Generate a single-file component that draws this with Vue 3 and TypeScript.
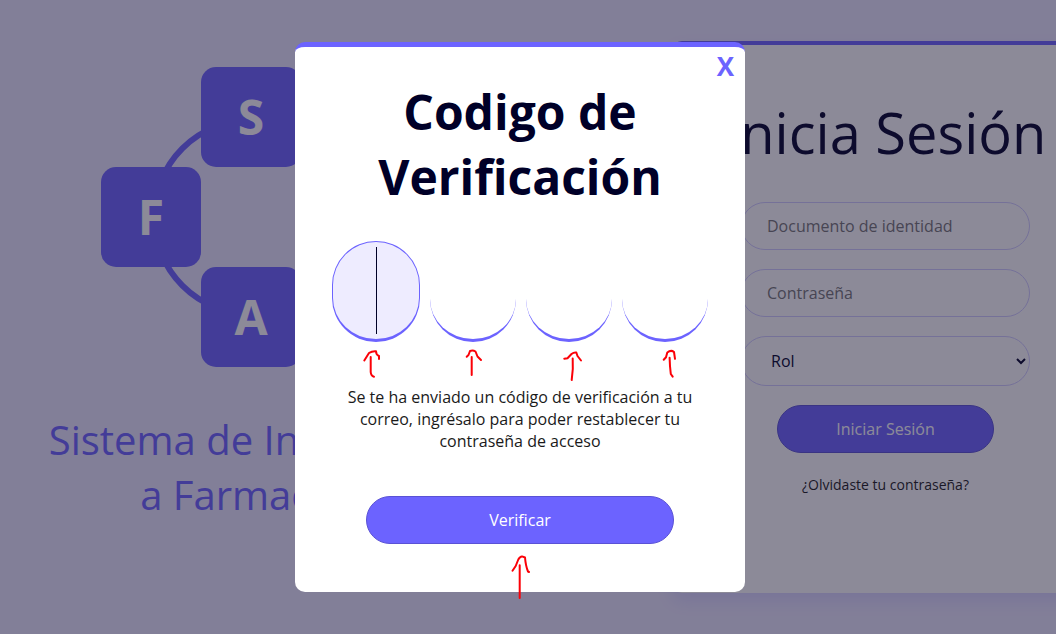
<script setup lang="ts">
import { ref } from 'vue'

const documento = ref('')
const clave = ref('')
const rol = ref('Rol')
const codigo = ref<string[]>(['', '', '', ''])
const abierto = ref(true)
</script>

<template>
  <div class="page">
    <section class="hero">
      <div class="logo">
        <span class="ring"></span>
        <span class="tile tile-s">S</span>
        <span class="tile tile-f">F</span>
        <span class="tile tile-a">A</span>
      </div>
      <p class="tagline">Sistema de Inventario<br />a Farmacias</p>
    </section>

    <form class="login" @submit.prevent>
      <h1>Inicia Sesión</h1>
      <input v-model="documento" class="field" type="text" placeholder="Documento de identidad" aria-label="Documento de identidad" />
      <input v-model="clave" class="field" type="password" placeholder="Contraseña" aria-label="Contraseña" />
      <select v-model="rol" class="field select" aria-label="Rol">
        <option>Rol</option>
      </select>
      <button class="btn btn-login" type="submit">Iniciar Sesión</button>
      <a class="forgot" href="#">¿Olvidaste tu contraseña?</a>
    </form>

    <div v-if="abierto" class="overlay">
      <form class="modal" role="dialog" aria-labelledby="modal-title" @submit.prevent>
        <button class="close" type="button" aria-label="Cerrar" @click="abierto = false">X</button>
        <h2 id="modal-title">Codigo de Verificación</h2>
        <div class="code">
          <label v-for="(_, i) in codigo" :key="i" class="cell" :class="{ active: i === 0 }">
            <input v-model="codigo[i]" class="digit" type="text" maxlength="1" :aria-label="`Dígito ${i + 1}`" />
          </label>
        </div>
        <p class="note">
          Se te ha enviado un código de verificación a tu correo, ingrésalo para poder restablecer tu contraseña de acceso
        </p>
        <button class="btn btn-verify" type="submit">Verificar</button>

        <svg class="arrows" viewBox="295 47 450 545" aria-hidden="true">
          <path d="M364.3 360.5 L369 353 Q372 351 376 351.3 Q376 355 379 356 L379 359 M370.7 357 L370.7 372 Q371 376 374 376.7" />
          <path d="M466.7 356.7 L468.5 355 L470 351 Q473 350 475.5 351.5 L477.5 356.5 L481 360 M471.7 357 L471.7 375" />
          <path d="M564.3 358.7 L567.5 358.2 L571.5 354 Q574 352 576.3 352.5 L577.5 356 L581 360.5 M572.7 358.5 Q573.4 369 571.7 380" />
          <path d="M663.7 359.7 L666 357.2 L667.3 352.5 Q671 349.5 674 352 L675 358.8 M669.6 357.7 Q669.8 366 670.8 374 L672.7 376.7" />
          <path d="M512.5 570.7 L515.7 566 L518.3 559.5 Q520 556.3 522 556.4 L525 557.5 Q525.7 566 528 571.5 L529 572 M519.7 565.3 L519.7 598" />
        </svg>
      </form>
    </div>
  </div>
</template>

<style>
body {
  background: #ebe8ff;
}
</style>

<style scoped>
.page,
.page * {
  box-sizing: border-box;
}

.page {
  display: grid;
  grid-template-columns: minmax(502px, 1fr) 427px;
  column-gap: 170px;
  align-items: center;
  min-height: 100vh;
  overflow: hidden;
  background: #ebe8ff;
  color: #000028;
  font-family: "Open Sans", "Noto Sans", sans-serif;
  font-size: 16px;
  line-height: 22px;
}

.hero {
  display: flex;
  flex-direction: column;
  align-items: center;
  gap: 45px;
  align-self: start;
  padding-top: 67px;
}

.logo {
  display: grid;
  grid-template-columns: repeat(3, 100px);
  grid-template-rows: repeat(3, 100px);
}

.ring {
  grid-area: 1 / 1 / 4 / 4;
  place-self: center;
  width: 200px;
  height: 200px;
  border: 6px solid #6c63ff;
  border-radius: 50%;
}

.tile {
  display: flex;
  align-items: center;
  justify-content: center;
  border-radius: 15px;
  background: #6c63ff;
  color: #fff;
  font-size: 48px;
  font-weight: 700;
}

.tile-s {
  grid-area: 1 / 2;
}

.tile-f {
  grid-area: 2 / 1;
}

.tile-a {
  grid-area: 3 / 2;
}

.tagline {
  margin: 0;
  color: #6c63ff;
  font-size: 40px;
  line-height: 55px;
  text-align: center;
  white-space: nowrap;
}

.login {
  display: flex;
  flex-direction: column;
  align-items: center;
  gap: 19px;
  min-height: 552px;
  padding: 50px 32px;
  border-top: 4px solid #6c63ff;
  border-radius: 10px;
  background: #fff;
  box-shadow: 0 8px 16px rgba(108, 99, 255, 0.15);
}

.login h1 {
  margin: 0 0 14px;
  font-size: 56px;
  font-weight: 400;
  line-height: 74px;
  white-space: nowrap;
}

.field {
  width: 289px;
  height: 48px;
  padding: 0 25px;
  border: 1px solid #d0ccff;
  border-radius: 25px;
  background: #fff;
  color: #000028;
  font: inherit;
}

.field::placeholder {
  color: #757575;
}

.select {
  height: 50px;
  padding: 0 0 0 25px;
}

.btn {
  height: 48px;
  border: 1px solid #5a52d5;
  border-radius: 25px;
  background: #6c63ff;
  color: #fff;
  font: inherit;
  font-weight: 500;
}

.btn-login {
  width: 217px;
}

.forgot {
  margin-top: 3px;
  color: #1a1a1a;
  font-size: 14px;
  line-height: 19px;
  text-decoration: none;
}

.overlay {
  position: fixed;
  inset: 0;
  display: flex;
  align-items: center;
  justify-content: center;
  padding-right: 16px;
  background: rgba(25, 21, 49, 0.5);
}

.modal {
  position: relative;
  display: flex;
  flex-direction: column;
  align-items: center;
  width: 450px;
  padding: 32px 36px 48px;
  border-top: 5px solid #6c63ff;
  border-radius: 10px;
  background: #fff;
}

.close {
  position: absolute;
  top: 0;
  right: 11px;
  padding: 0;
  border: 0;
  background: none;
  color: #6c63ff;
  font: inherit;
  font-size: 26px;
  font-weight: 700;
  line-height: 38px;
}

.modal h2 {
  margin: 0 0 32px;
  font-size: 48px;
  font-weight: 700;
  line-height: 65px;
  text-align: center;
}

.code {
  display: flex;
  align-items: flex-end;
  gap: 10px;
}

.cell {
  position: relative;
  display: flex;
}

.digit {
  width: 86px;
  height: 100px;
  padding: 5px;
  border: 0 solid #6c63ff;
  border-bottom-width: 3px;
  border-radius: 50px;
  outline: 0;
  background: #fff;
  color: #000028;
  font: inherit;
  font-size: 64px;
  text-align: center;
}

.active .digit {
  width: 88px;
  height: 101px;
  border-width: 1px 1px 3px;
  background: #eeecff;
}

.active::after {
  content: "";
  position: absolute;
  top: 6px;
  left: 50%;
  width: 1px;
  height: 87px;
  background: #000028;
}

.note {
  margin: 44px 0;
  color: #1a1a1a;
  text-align: center;
}

.btn-verify {
  width: 308px;
}

.arrows {
  position: absolute;
  inset: 0;
  width: 100%;
  height: 100%;
  overflow: visible;
  pointer-events: none;
  fill: none;
  stroke: #fb0007;
  stroke-width: 2;
  stroke-linecap: round;
  stroke-linejoin: round;
}
</style>
